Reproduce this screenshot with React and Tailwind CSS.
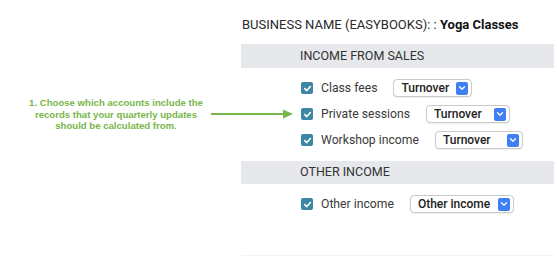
import React from "react";

function Check() {
  return (
    <div className="w-[12px] h-[12px] rounded-[2px] bg-[#3d86a6] flex items-center justify-center shrink-0">
      <svg width="9" height="9" viewBox="0 0 10 10">
        <path d="M2 5.2 L4.2 7.3 L8.2 2.8" fill="none" stroke="#ffffff" strokeWidth="1.8" strokeLinecap="round" strokeLinejoin="round" />
      </svg>
    </div>
  );
}

function Select({ value, w }) {
  return (
    <div
      className="h-[18px] border border-[#c9c9c9] rounded-[4px] bg-white flex items-center justify-between pl-[7px] pr-[3px] shadow-[0_1px_1px_rgba(0,0,0,0.06)]"
      style={{ width: w }}
    >
      <span className="text-[12px] font-medium text-[#222] leading-none">{value}</span>
      <div className="w-[12px] h-[13px] rounded-[2px] bg-[#3e80f4] flex items-center justify-center">
        <svg width="8" height="6" viewBox="0 0 8 6">
          <path d="M1.5 1.8 L4 4.2 L6.5 1.8" fill="none" stroke="#ffffff" strokeWidth="1.3" strokeLinecap="round" strokeLinejoin="round" />
        </svg>
      </div>
    </div>
  );
}

function Row({ label, value, w }) {
  return (
    <div className="h-[26px] flex items-center pl-[60px]">
      <Check />
      <span className="ml-[8px] text-[12.2px] text-[#3a3a3a] leading-none">{label}</span>
      <div className="ml-[16px]">
        <Select value={value} w={w} />
      </div>
    </div>
  );
}

export default function App() {
  return (
    <div
      className="relative w-[557px] h-[277px] bg-white flex"
      style={{ fontFamily: "Roboto, 'Liberation Sans', sans-serif" }}
    >
      <div className="w-[241px] shrink-0 pt-[97px]">
        <div
          className="w-[232px] text-center text-[9.6px] leading-[11.5px] font-bold text-[#78b64a]"
          style={{ fontFamily: "'Liberation Sans', Arial, sans-serif" }}
        >
          1. Choose which accounts include the
          <br />
          records that your quarterly updates
          <br />
          should be calculated from.
        </div>
      </div>
      <svg className="absolute left-[210px] top-[109px]" width="84" height="10" viewBox="0 0 84 10">
        <line x1="1" y1="5" x2="74" y2="5" stroke="#78b64a" strokeWidth="2" />
        <path d="M73 0.5 L83 5 L73 9.5 Z" fill="#78b64a" />
      </svg>
      <div className="w-[313px] shrink-0 flex flex-col pt-[17px]">
        <div className="text-[13px] leading-[16px] text-[#2a2a2a] pl-[1px]">
          BUSINESS NAME (EASYBOOKS): : <span className="font-bold text-[#111]">Yoga Classes</span>
        </div>
        <div className="mt-[11px] h-[24px] bg-[#e6e8eb] flex items-center pl-[59px] text-[12.5px] text-[#333]">
          INCOME FROM SALES
        </div>
        <div className="mt-[7px] flex flex-col">
          <Row label="Class fees" value="Turnover" w={79} />
          <Row label="Private sessions" value="Turnover" w={84} />
          <Row label="Workshop income" value="Turnover" w={88} />
        </div>
        <div className="mt-[8px] h-[23px] bg-[#e6e8eb] flex items-center pl-[59px] text-[12.5px] text-[#333]">
          OTHER INCOME
        </div>
        <div className="mt-[7px]">
          <Row label="Other income" value="Other income" w={104} />
        </div>
        <div className="mt-[38px] h-px bg-[#f2f2f2]" />
      </div>
    </div>
  );
}
